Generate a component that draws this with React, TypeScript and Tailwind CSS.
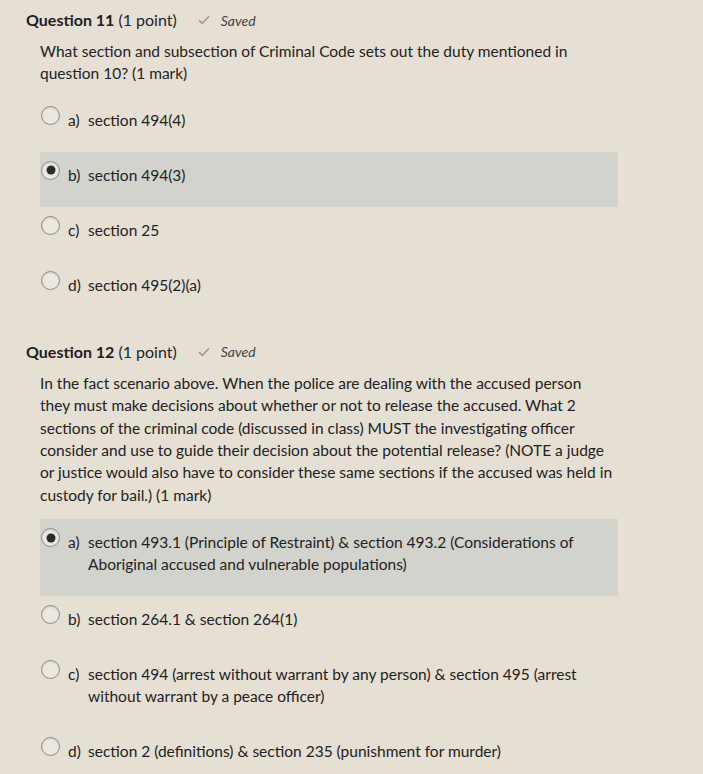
import React from "react";

type Opt = { letter: string; text: string; checked?: boolean };

function Radio({ checked }: { checked?: boolean }) {
  return (
    <div className="relative mt-[-3px] h-[19px] w-[19px] shrink-0 rounded-full border border-[#8c8c8c] bg-[#ece7df] shadow-[inset_0_1px_2px_rgba(0,0,0,0.12)]">
      {checked && (
        <div className="absolute left-1/2 top-1/2 h-[9px] w-[9px] -translate-x-1/2 -translate-y-1/2 rounded-full bg-[#2b2b2b]" />
      )}
    </div>
  );
}

function Option({ o }: { o: Opt }) {
  return (
    <div
      className={`flex items-start w-[578px] pl-[1px] pt-[12px] pb-[21px] ${o.checked ? "bg-[#d3d3cd]" : ""}`}
    >
      <Radio checked={o.checked} />
      <div className="ml-[8px] flex text-[15.5px] leading-[22px] text-[#222]">
        <span className="w-[20px] shrink-0">{o.letter}</span>
        <span className="pr-[30px]">{o.text}</span>
      </div>
    </div>
  );
}

function Header({ n }: { n: number }) {
  return (
    <div className="flex h-[20px] items-center text-[16px] text-[#1e1e1e]">
      <span className="font-bold">Question {n}</span>
      <span className="ml-[4px]">(1 point)</span>
      <svg className="ml-[21px]" width="12" height="10" viewBox="0 0 12 10">
        <path d="M1 5.2 L4.3 8.3 L11 1.2" fill="none" stroke="#9a9a9a" strokeWidth="1.6" />
      </svg>
      <span className="ml-[11px] text-[14px] italic text-[#444]">Saved</span>
    </div>
  );
}

function Question({
  n,
  lines,
  options,
  listClass,
}: {
  n: number;
  lines: string[];
  options: Opt[];
  listClass: string;
}) {
  return (
    <div>
      <Header n={n} />
      <div className="ml-[14px]">
        <p className="mt-[10px] w-[590px] text-[15.5px] leading-[22.4px] text-[#222]">
          {lines.map((l, i) => (
            <React.Fragment key={i}>
              {l}
              {i < lines.length - 1 && <br />}
            </React.Fragment>
          ))}
        </p>
        <div className={`flex flex-col ${listClass}`}>
          {options.map((o) => (
            <Option key={o.letter} o={o} />
          ))}
        </div>
      </div>
    </div>
  );
}

export default function App() {
  return (
    <div
      className="min-h-[774px] w-full bg-[#e6dfd4] pl-[26px] pt-[10px]"
      style={{ fontFamily: "Lato, 'Open Sans', sans-serif" }}
    >
      <Question
        n={11}
        listClass="mt-[12px]"
        lines={[
          "What section and subsection of Criminal Code sets out the duty mentioned in",
          "question 10? (1 mark)",
        ]}
        options={[
          { letter: "a)", text: "section 494(4)" },
          { letter: "b)", text: "section 494(3)", checked: true },
          { letter: "c)", text: "section 25" },
          { letter: "d)", text: "section 495(2)(a)" },
        ]}
      />
      <div className="mt-[25px]">
        <Question
          n={12}
          listClass="mt-[13px]"
          lines={[
            "In the fact scenario above. When the police are dealing with the accused person",
            "they must make decisions about whether or not to release the accused. What 2",
            "sections of the criminal code (discussed in class) MUST the investigating officer",
            "consider and use to guide their decision about the potential release? (NOTE a judge",
            "or justice would also have to consider these same sections if the accused was held in",
            "custody for bail.) (1 mark)",
          ]}
          options={[
            {
              letter: "a)",
              text: "section 493.1 (Principle of Restraint) & section 493.2 (Considerations of Aboriginal accused and vulnerable populations)",
              checked: true,
            },
            { letter: "b)", text: "section 264.1 & section 264(1)" },
            {
              letter: "c)",
              text: "section 494 (arrest without warrant by any person) & section 495 (arrest without warrant by a peace officer)",
            },
            { letter: "d)", text: "section 2 (definitions) & section 235 (punishment for murder)" },
          ]}
        />
      </div>
    </div>
  );
}
